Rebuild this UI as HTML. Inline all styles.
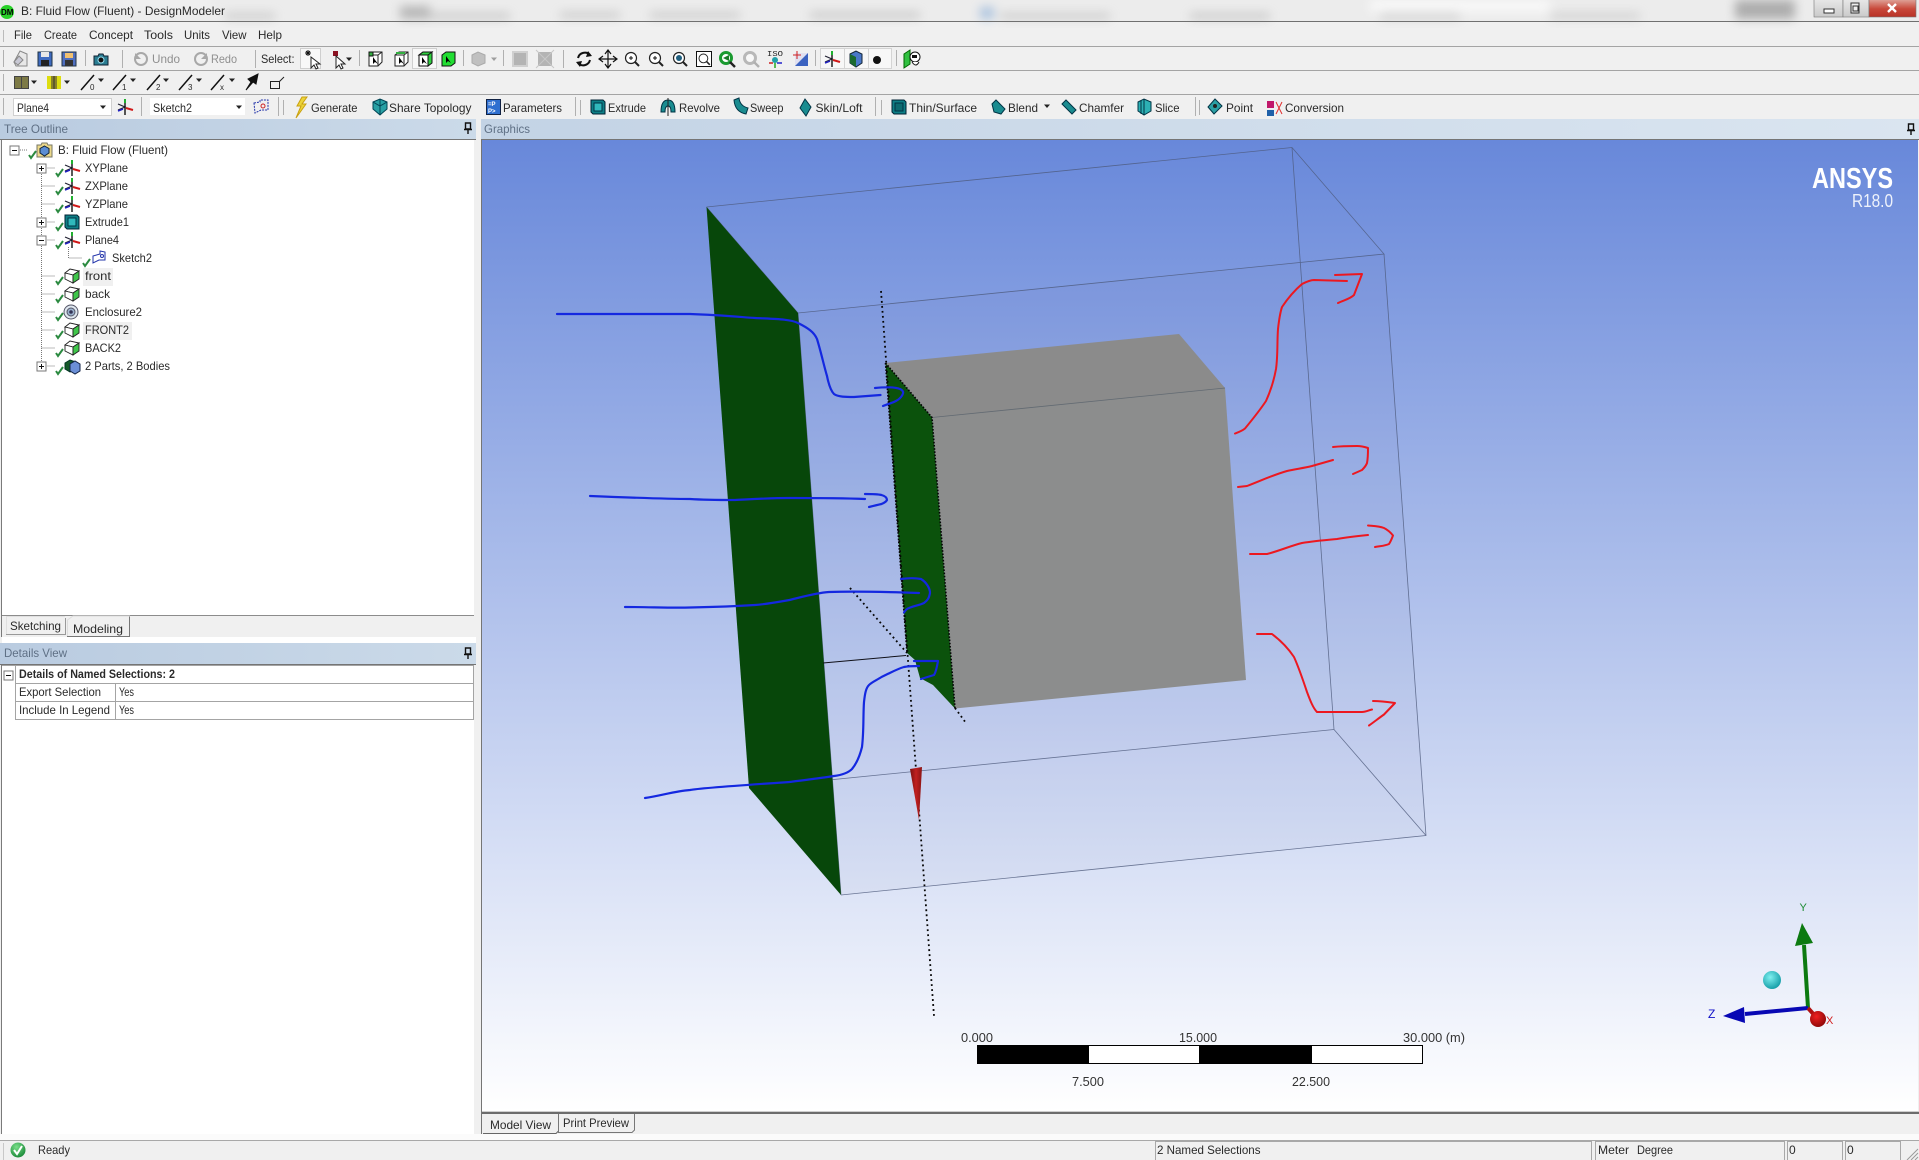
<!DOCTYPE html>
<html><head><meta charset="utf-8"><title>B: Fluid Flow (Fluent) - DesignModeler</title>
<style>
html,body{margin:0;padding:0;background:#f0f0f0;width:1919px;height:1160px;overflow:hidden}
svg{display:block;position:absolute;left:0;top:0}
text{font-family:"Liberation Sans",sans-serif;font-size:12px;fill:#2a2a2a}
.d{fill:#8f8f8f}
.h{fill:#5f7085}
.g{fill:#333;font-size:13px}
</style></head><body>
<svg xmlns="http://www.w3.org/2000/svg" width="1919" height="1160" viewBox="0 0 1919 1160">
<defs>
<linearGradient id="gfx" x1="0" y1="0" x2="0" y2="1"><stop offset="0" stop-color="#6888da"/><stop offset="1" stop-color="#ffffff"/></linearGradient>
<linearGradient id="hL" x1="0" x2="1" y1="0" y2="0"><stop offset="0" stop-color="#b9cbe0"/><stop offset="1" stop-color="#cbdae9"/></linearGradient>
<linearGradient id="hR" x1="0" x2="1" y1="0" y2="0"><stop offset="0" stop-color="#c3d3e5"/><stop offset="1" stop-color="#dae5f0"/></linearGradient>
<linearGradient id="cl" x1="0" x2="0" y1="0" y2="1"><stop offset="0" stop-color="#e0a89e"/><stop offset=".55" stop-color="#c8483a"/><stop offset="1" stop-color="#b83226"/></linearGradient>
<linearGradient id="mn" x1="0" x2="0" y1="0" y2="1"><stop offset="0" stop-color="#e8e8e8"/><stop offset="1" stop-color="#cacaca"/></linearGradient>
<linearGradient id="cone" x1="0" x2="1" y1="0" y2="0"><stop offset="0" stop-color="#7a1010"/><stop offset=".5" stop-color="#c02020"/><stop offset="1" stop-color="#8a1414"/></linearGradient>
<radialGradient id="cy" cx=".4" cy=".35" r=".7"><stop offset="0" stop-color="#7ff0f0"/><stop offset="1" stop-color="#109aa4"/></radialGradient>
<radialGradient id="rd" cx=".4" cy=".35" r=".7"><stop offset="0" stop-color="#f02020"/><stop offset="1" stop-color="#8a0808"/></radialGradient>
<radialGradient id="gc" cx=".4" cy=".3" r=".8"><stop offset="0" stop-color="#7adf8a"/><stop offset="1" stop-color="#108030"/></radialGradient>
<filter id="bl" x="-20%" y="-100%" width="140%" height="300%"><feGaussianBlur stdDeviation="5"/></filter>

<g id="chk"><path d="M-3 1 L-1 4 L4 -3" fill="none" stroke="#2b8a40" stroke-width="2"/></g>
<g id="pl"><path d="M-7 3 L0 0 L-7 -3" fill="none" stroke="#223" stroke-width="1.2"/><path d="M0 -6V8" stroke="#111" stroke-width="1.4"/><path d="M0 -8V-4" stroke="#20b030" stroke-width="2"/><path d="M1 1 L8 3" stroke="#d01818" stroke-width="2"/><path d="M-7 4 L-2 2" stroke="#2020c0" stroke-width="1.6"/></g>
<g id="cb"><path d="M-7 -3 L-2 -7 L7 -5 L1 -1Z" fill="#fff" stroke="#222" stroke-width=".9"/><path d="M-7 -3 L1 -1 L1 7 L-7 3Z" fill="#fff" stroke="#222" stroke-width=".9"/><path d="M1 -1 L7 -5 L7 3 L1 7Z" fill="#3fc64a" stroke="#222" stroke-width=".9"/></g>
<g id="cs"><path d="M-6 -4 L-2 -7 L7 -7 L7 3 L3 7 L-6 7Z M-6 -4 L3 -4 L3 7 M3 -4 L7 -7" fill="#fff" stroke="#222" stroke-width="1"/><path d="M-2 -2 L-2 5 L0 3 L3 5Z" fill="#000"/></g>
<g id="dd"><path d="M-3 -1.5 L3 -1.5 L0 2Z" fill="#222"/></g>
<g id="pin"><path d="M-2.5 -5 H2.5 V1 H-2.5Z M-4 1.5 H4 M0 2 V6" fill="none" stroke="#111" stroke-width="1.4"/></g>
<g id="bx"><rect x="-4.5" y="-4.5" width="9" height="9" fill="#fff" stroke="#777"/><path d="M-2.5 0 H2.5" stroke="#111"/></g>
<g id="bp"><rect x="-4.5" y="-4.5" width="9" height="9" fill="#fff" stroke="#777"/><path d="M-2.5 0 H2.5 M0 -2.5 V2.5" stroke="#111"/></g>
<g id="mg"><circle cx="-1" cy="-1" r="5.5" fill="#fff" stroke="#222" stroke-width="1.2"/><path d="M3 3 L7 7" stroke="#222" stroke-width="2"/></g>
<g id="teal"><path d="M-7 -7 H5 L7 -5 V7 H-5 L-7 5Z" fill="#0e7f86" stroke="#023"/><rect x="-4" y="-4" width="8" height="8" fill="#30b9bc" stroke="#034"/></g>
</defs>

<rect width="1919" height="1160" fill="#f0f0f0"/>

<!-- title bar -->
<rect width="1919" height="21" fill="#ececec"/>
<g filter="url(#bl)" opacity=".65">
<rect x="120" y="0" width="90" height="6" fill="#f8f8f8"/>
<rect x="225" y="13" width="50" height="6" fill="#b8b8b8"/>
<rect x="400" y="6" width="30" height="13" fill="#9a9a9a"/>
<rect x="430" y="13" width="80" height="6" fill="#b4b4b4"/>
<rect x="560" y="12" width="60" height="6" fill="#b8b8b8"/>
<rect x="650" y="12" width="90" height="6" fill="#b8b8b8"/>
<rect x="810" y="12" width="110" height="6" fill="#b4b4b4"/>
<rect x="980" y="7" width="14" height="12" fill="#8aaed8"/>
<rect x="1000" y="13" width="110" height="6" fill="#bababa"/>
<rect x="1190" y="13" width="80" height="6" fill="#b4b4b4"/>
<rect x="1370" y="0" width="180" height="12" fill="#ffffff"/>
<rect x="1380" y="13" width="80" height="6" fill="#bcbcbc"/>
<rect x="1550" y="13" width="90" height="6" fill="#c0c0c0"/>
<rect x="1735" y="0" width="60" height="19" fill="#8c8c8c"/>
</g>
<rect x="1814" y="-1" width="29" height="18" fill="url(#mn)" stroke="#777" stroke-width=".6"/>
<rect x="1843" y="-1" width="26" height="18" fill="url(#mn)" stroke="#777" stroke-width=".6"/>
<rect x="1869" y="-1" width="47" height="18" fill="url(#cl)" stroke="#777" stroke-width=".6"/>
<rect x="1824" y="9" width="10" height="4" fill="#fff" stroke="#333"/>
<rect x="1851" y="3" width="8" height="10" fill="#eee" stroke="#333"/><rect x="1853" y="6" width="5" height="5" fill="none" stroke="#333"/>
<path d="M1888 4 L1896 12 M1896 4 L1888 12" stroke="#fff" stroke-width="2.4"/>
<circle cx="7" cy="12" r="7" fill="#28d028"/>
<text x="1" y="15" style="font-size:8px;font-weight:bold;fill:#000">DM</text>
<text x="21" y="15" textLength="204" lengthAdjust="spacingAndGlyphs">B: Fluid Flow (Fluent) - DesignModeler</text>
<path d="M0 21.5H1919" stroke="#707070"/>

<!-- menu -->
<path d="M3.5 30V42" stroke="#bbb"/>
<text x="14" y="39" textLength="18" lengthAdjust="spacingAndGlyphs">File</text>
<text x="44" y="39" textLength="33" lengthAdjust="spacingAndGlyphs">Create</text>
<text x="89" y="39" textLength="44" lengthAdjust="spacingAndGlyphs">Concept</text>
<text x="144" y="39" textLength="29" lengthAdjust="spacingAndGlyphs">Tools</text>
<text x="184" y="39" textLength="26" lengthAdjust="spacingAndGlyphs">Units</text>
<text x="222" y="39" textLength="24.500" lengthAdjust="spacingAndGlyphs">View</text>
<text x="258" y="39" textLength="24" lengthAdjust="spacingAndGlyphs">Help</text>
<path d="M0 46.500H1919M0 70.500H1919M0 94.500H1919" stroke="#a4a4a4"/>

<!-- toolbar row 2 -->
<g stroke="#b0b0b0"><path d="M3.500 50V67M85.500 50V66M122.500 50V68M255.500 50V68M359.500 50V66M463.500 50V66M503.500 50V66M563.500 50V68M815.500 50V66M896.500 50V66"/></g>
<path d="M14 62 L20 51 L27 54 L27 66 L16 66Z" fill="#e8e8e8" stroke="#888"/><path d="M14 62 L19 56 L23 60 L18 65Z" fill="#c8c8d4" stroke="#888"/>
<rect x="38" y="52" width="14" height="14" fill="#3f6bc0" stroke="#234"/><rect x="41" y="52" width="8" height="5" fill="#e8e8e8"/><rect x="41" y="60" width="8" height="6" fill="#222"/>
<rect x="62" y="52" width="14" height="14" fill="#4f6fc0" stroke="#234"/><rect x="65" y="53" width="8" height="5" fill="#f0c070"/><rect x="65" y="60" width="8" height="6" fill="#333"/>
<path d="M94 56 H98 L99 54 H103 L104 56 H108 V65 H94Z" fill="#2a7d92" stroke="#123"/><circle cx="101" cy="60" r="3" fill="#111" stroke="#9de"/>
<circle cx="141" cy="59" r="6" fill="none" stroke="#a8a8a8" stroke-width="2"/><path d="M135 53 L135 59 L141 59Z" fill="#a8a8a8"/>
<text x="152" y="63" class="d" textLength="28" lengthAdjust="spacingAndGlyphs">Undo</text>
<circle cx="201" cy="59" r="6" fill="none" stroke="#a8a8a8" stroke-width="2"/><path d="M207 53 L207 59 L201 59Z" fill="#a8a8a8"/>
<text x="211" y="63" class="d" textLength="26" lengthAdjust="spacingAndGlyphs">Redo</text>
<text x="261" y="63" textLength="33.500" lengthAdjust="spacingAndGlyphs">Select:</text>
<rect x="300.500" y="48.500" width="20" height="20" fill="#f8f8f8" stroke="#cfcfcf"/>
<path d="M305 53H311M308 50V56M306 51L310 55M310 51L306 55" stroke="#111"/>
<path d="M311 57 V68 L314 65 L316 69 L318 68 L316 64 L320 64Z" fill="#fff" stroke="#222"/>
<rect x="333" y="51" width="5" height="5" fill="#8a1020"/>
<path d="M336 56 V68 L339 65 L341 69 L343 68 L341 64 L345 64Z" fill="#fff" stroke="#222"/>
<use href="#dd" x="349" y="59"/>
<use href="#cs" x="375" y="59"/><rect x="369" y="52" width="4" height="4" fill="#32b040" stroke="#111"/>
<use href="#cs" x="401" y="59"/><path d="M396 53 L405 53" stroke="#32b040" stroke-width="2"/>
<rect x="412.500" y="48.500" width="24" height="20" fill="#f8f8f8" stroke="#cfcfcf"/>
<use href="#cs" x="425" y="59"/><path d="M419 55 H428 V66 H419Z" fill="#fff" stroke="#111"/><path d="M419 55 L423 52 H432 L428 55Z M428 55 L432 52 V63 L428 66Z" fill="#30d040" stroke="#111"/><path d="M422 57 V64 L424 62 L427 64Z" fill="#000"/>
<path d="M442 55 L446 52 H455 V63 L451 66 H442Z" fill="#22dd33" stroke="#111"/><path d="M446 56 V63 L448 61 L451 63Z" fill="#000"/>
<path d="M472 55 L478 52 L485 55 V63 L478 66 L472 63Z" fill="#c0c0c0" stroke="#aaa"/><use href="#dd" x="494" y="59" opacity=".4"/>
<rect x="513" y="52" width="14" height="14" fill="#b4b4b4" stroke="#d0d0d0" stroke-width="2"/>
<rect x="538" y="52" width="14" height="14" fill="#b4b4b4"/><path d="M536 50 L554 68 M554 50 L536 68" stroke="#c8c8c8"/>
<!-- view -->
<path d="M590 55 A7 7 0 0 0 578 58 M578 63 A7 7 0 0 0 590 60" fill="none" stroke="#111" stroke-width="2"/><path d="M588 51 L592 56 L586 57Z M580 67 L576 62 L582 61Z" fill="#111"/>
<path d="M608 51V67M600 59H616M605 54L608 50L611 54M605 64L608 68L611 64M603 56L599 59L603 62M613 56L617 59L613 62" fill="none" stroke="#111" stroke-width="1.2"/>
<use href="#mg" x="632" y="59"/><path d="M629 58H633M631 56V60" stroke="#111"/>
<use href="#mg" x="656" y="59"/><path d="M653 58H657M655 56V60" stroke="#111"/>
<use href="#mg" x="680" y="59"/><circle cx="679" cy="58" r="3" fill="#1f5f7f"/>
<rect x="696.500" y="51.500" width="15" height="15" fill="#fff" stroke="#111"/><use href="#mg" x="704" y="59" transform="translate(141 12) scale(.8)"/>
<circle cx="726" cy="58" r="5.500" fill="#fff" stroke="#1a9a30" stroke-width="3"/><path d="M729 55 L723 58 L729 61Z" fill="#1a7a28"/><path d="M730 62 L735 67" stroke="#222" stroke-width="2.400"/>
<circle cx="750" cy="58" r="5.500" fill="#f8f8f8" stroke="#b8b8b8" stroke-width="3"/><path d="M754 62 L759 67" stroke="#b0b0b0" stroke-width="2.400"/>
<text x="767" y="56" style="font-family:'Liberation Mono',monospace;font-size:7.500px;fill:#222" textLength="16" lengthAdjust="spacingAndGlyphs">ISO</text>
<circle cx="775" cy="60" r="3" fill="#1fa0a8"/><path d="M769 63H773" stroke="#c22" stroke-width="1.500"/><path d="M777 63H782" stroke="#22c" stroke-width="1.500"/><path d="M775 63V68" stroke="#2a2" stroke-width="1.500"/>
<rect x="795" y="53" width="13" height="13" fill="#3b62c0"/><path d="M795 53 L808 53 L795 66Z" fill="#e0e0f0"/><path d="M793 55H801M797 51V59" stroke="#d02020"/>
<rect x="820.500" y="48.500" width="71" height="20" fill="#f7f7f7" stroke="#d4d4d4"/><path d="M844.500 49V68M868.500 49V68" stroke="#d4d4d4"/>
<use href="#pl" x="832" y="59"/>
<path d="M850 54 L856 51 L862 54 V63 L856 67 L850 63Z" fill="#4a78c8" stroke="#123"/><path d="M850 54 L856 57 L856 67 L850 63Z" fill="#1a6a30"/>
<circle cx="877" cy="60" r="4" fill="#111"/>
<path d="M904 54 L910 50 V64 L904 68Z" fill="#30c040" stroke="#060"/><circle cx="915" cy="57" r="5" fill="#fff" stroke="#111"/><path d="M912 62 Q916 68 919 62" fill="#fff" stroke="#111"/><rect x="912" y="55" width="5" height="3" fill="#111"/>

<!-- toolbar row 3 -->
<path d="M3.500 74V91" stroke="#b0b0b0"/>
<rect x="14.500" y="76.500" width="14" height="12" fill="#7d7a46" stroke="#444"/><path d="M21.500 77V88" stroke="#444"/><use href="#dd" x="34" y="82"/>
<rect x="47" y="76" width="14" height="13" fill="#dddd10"/><rect x="51" y="76" width="6" height="13" fill="#88822a"/><path d="M54 76V89" stroke="#333"/><use href="#dd" x="67" y="82"/>
<g stroke="#111" stroke-width="1.500"><path d="M81 90 L94 75M113 90 L126 75M147 90 L160 75M179 90 L192 75M211 90 L224 75"/></g>
<text x="90" y="90" style="font-size:8px">0</text><text x="122" y="90" style="font-size:8px">1</text><text x="156" y="90" style="font-size:8px">2</text><text x="188" y="90" style="font-size:8px">3</text><text x="220" y="90" style="font-size:8px">x</text>
<use href="#dd" x="101" y="80"/><use href="#dd" x="133" y="80"/><use href="#dd" x="166" y="80"/><use href="#dd" x="199" y="80"/><use href="#dd" x="232" y="80"/>
<path d="M246 90 L251 82 L248 79 L258 74 L256 84 L253 82Z" fill="#111" stroke="#111"/>
<path d="M270.500 81.500H279.500V88.500H270.500Z M279.500 81.500 L284 77" fill="none" stroke="#222"/>

<!-- toolbar row 4 -->
<path d="M3.500 98V115" stroke="#b0b0b0"/>
<rect x="13.500" y="98.500" width="98" height="17" fill="#fff" stroke="#d0d0d0"/><use href="#dd" x="103" y="107"/>
<text x="17" y="112" textLength="32" lengthAdjust="spacingAndGlyphs">Plane4</text>
<use href="#pl" x="125" y="107"/>
<path d="M141.500 97V116" stroke="#b0b0b0"/>
<rect x="150" y="98" width="95" height="17" fill="#fff"/><use href="#dd" x="239" y="107"/>
<text x="153" y="112" textLength="39" lengthAdjust="spacingAndGlyphs">Sketch2</text>
<path d="M254 103 L260 102 V100 H268 V110 H261 L255 113Z" fill="none" stroke="#2233aa" stroke-dasharray="2 1"/><circle cx="263" cy="106" r="2" fill="none" stroke="#c22"/>
<path d="M278.500 97V116M283.500 100V115" stroke="#b0b0b0"/>
<path d="M302 97 L297 106 H301 L296 118 L306 104 H302 L307 97Z" fill="#ecd43a" stroke="#c9a010"/>
<text x="311" y="112" textLength="46.500" lengthAdjust="spacingAndGlyphs">Generate</text>
<path d="M373 102 L380 99 L387 102 V109 L380 115 L373 109Z" fill="#28a0a4" stroke="#045"/><path d="M380 99V115M373 102L380 106L387 102" stroke="#045" fill="none"/>
<text x="389" y="112" textLength="82.500" lengthAdjust="spacingAndGlyphs">Share Topology</text>
<rect x="486.500" y="99.500" width="14" height="15" fill="#2f6fd0" stroke="#124"/><text x="488" y="106" style="font-size:6px;fill:#fff;font-weight:bold">=P</text><text x="488" y="113" style="font-size:6px;fill:#fff;font-weight:bold">P&gt;</text>
<text x="503" y="112" textLength="59" lengthAdjust="spacingAndGlyphs">Parameters</text>
<path d="M575.500 97V116M580.500 100V115" stroke="#b0b0b0"/>
<use href="#teal" x="598" y="107"/>
<text x="608" y="112" textLength="38" lengthAdjust="spacingAndGlyphs">Extrude</text>
<path d="M661 112 Q661 100 668 100 Q675 100 675 112 H671 Q671 106 668 106 Q665 106 665 112Z" fill="#1a8c90" stroke="#034"/><path d="M668 98V116" stroke="#222"/>
<text x="679" y="112" textLength="41" lengthAdjust="spacingAndGlyphs">Revolve</text>
<path d="M734 100 L739 98 Q740 106 748 108 L746 114 Q735 112 734 100Z" fill="#1a8c90" stroke="#034"/>
<text x="750" y="112" textLength="33.500" lengthAdjust="spacingAndGlyphs">Sweep</text>
<path d="M805 99 L811 107 L806 116 L800 108Z" fill="#1a8c90" stroke="#034"/>
<text x="815.500" y="112" textLength="47" lengthAdjust="spacingAndGlyphs">Skin/Loft</text>
<path d="M875.500 97V116M881.500 100V115" stroke="#b0b0b0"/>
<use href="#teal" x="899" y="107"/><rect x="895" y="103" width="8" height="8" fill="#0c6a70" stroke="#034"/>
<text x="909" y="112" textLength="68" lengthAdjust="spacingAndGlyphs">Thin/Surface</text>
<path d="M992 104 L996 100 L1005 109 L1001 114 L994 112Z" fill="#1a8c90" stroke="#034"/>
<text x="1008" y="112" textLength="30" lengthAdjust="spacingAndGlyphs">Blend</text>
<use href="#dd" x="1047" y="106"/>
<path d="M1062 104 L1066 100 L1076 110 L1072 114Z" fill="#1a8c90" stroke="#034"/>
<text x="1079" y="112" textLength="45" lengthAdjust="spacingAndGlyphs">Chamfer</text>
<path d="M1138 102 L1144 99 L1151 102 V111 L1144 115 L1138 111Z" fill="#2cb0b4" stroke="#034"/><path d="M1144 99V115M1141 100V114" stroke="#034"/>
<text x="1155" y="112" textLength="24.500" lengthAdjust="spacingAndGlyphs">Slice</text>
<path d="M1195.500 97V116M1199.500 100V115" stroke="#b0b0b0"/>
<path d="M1215 99 L1222 106 L1214 114 L1208 107Z" fill="#2aa0a4" stroke="#034"/><circle cx="1215" cy="106" r="2" fill="#222"/>
<text x="1226" y="112" textLength="27" lengthAdjust="spacingAndGlyphs">Point</text>
<rect x="1267" y="101" width="7" height="7" fill="#c0186a"/><rect x="1267" y="110" width="7" height="6" fill="#2060a8"/><path d="M1276 102 L1282 114 M1282 102 L1276 114" stroke="#e03030"/>
<text x="1285" y="112" textLength="59" lengthAdjust="spacingAndGlyphs">Conversion</text>

<!-- panel headers -->
<rect x="0" y="119" width="476" height="21" fill="url(#hL)"/>
<rect x="481" y="119" width="1438" height="21" fill="url(#hR)"/>
<path d="M0 139.500H476M481 139.500H1919" stroke="#757575"/>
<text x="4" y="133" class="h" textLength="64" lengthAdjust="spacingAndGlyphs">Tree Outline</text>
<text x="484" y="133" class="h" textLength="46" lengthAdjust="spacingAndGlyphs">Graphics</text>
<use href="#pin" x="468" y="128"/><use href="#pin" x="1911" y="129"/>

<!-- tree -->
<rect x="2" y="140" width="472" height="475" fill="#fff"/>
<path d="M1.500 140V637" stroke="#7a7a7a"/>
<rect x="83" y="268" width="30" height="18" fill="#f0f0f0"/>
<rect x="83" y="322" width="49" height="18" fill="#f0f0f0"/>
<g stroke="#777" stroke-dasharray="1 1" fill="none">
<path d="M41.500 172V366M41.500 168H55M41.500 186H55M41.500 204H55M41.500 222H55M41.500 240H55M41.500 276H55M41.500 294H55M41.500 312H55M41.500 330H55M41.500 348H55M41.500 366H55M20 150H28M68.500 247V258H82"/>
</g>
<use href="#bx" x="14.500" y="150.500"/>
<use href="#chk" x="32" y="154"/>
<path d="M37 145 H41 L42 143 H47 L48 145 H52 V157 H37Z" fill="#ecd98a" stroke="#776"/><path d="M44.500 146 L49 148.500 V153 L44.500 156 L40 153 V148.500Z" fill="#5b8dd4" stroke="#123"/>
<text x="58" y="154" textLength="110" lengthAdjust="spacingAndGlyphs">B: Fluid Flow (Fluent)</text>

<use href="#bp" x="41.500" y="168.500"/><use href="#chk" x="59" y="172"/><use href="#pl" x="72" y="168"/>
<text x="85" y="172" textLength="43" lengthAdjust="spacingAndGlyphs">XYPlane</text>
<use href="#chk" x="59" y="190"/><use href="#pl" x="72" y="186"/>
<text x="85" y="190" textLength="43" lengthAdjust="spacingAndGlyphs">ZXPlane</text>
<use href="#chk" x="59" y="208"/><use href="#pl" x="72" y="204"/>
<text x="85" y="208" textLength="43" lengthAdjust="spacingAndGlyphs">YZPlane</text>
<use href="#bp" x="41.500" y="222.500"/><use href="#chk" x="59" y="226"/><use href="#teal" x="72" y="222"/>
<text x="85" y="226" textLength="44" lengthAdjust="spacingAndGlyphs">Extrude1</text>
<use href="#bx" x="41.500" y="240.500"/><use href="#chk" x="59" y="244"/><use href="#pl" x="72" y="240"/>
<text x="85" y="244" textLength="34" lengthAdjust="spacingAndGlyphs">Plane4</text>
<use href="#chk" x="86" y="262"/>
<path d="M93 263 V256 L100 254 V251 L105 252 V260 L99 260 Z" fill="#fff" stroke="#2233aa"/><circle cx="102" cy="256" r="1.500" fill="none" stroke="#2233aa"/>
<text x="112" y="262" textLength="40" lengthAdjust="spacingAndGlyphs">Sketch2</text>
<use href="#chk" x="59" y="280"/><use href="#cb" x="72" y="276"/>
<text x="85" y="280" textLength="26" lengthAdjust="spacingAndGlyphs">front</text>
<use href="#chk" x="59" y="298"/><use href="#cb" x="72" y="294"/>
<text x="85" y="298" textLength="25" lengthAdjust="spacingAndGlyphs">back</text>
<use href="#chk" x="59" y="316"/><circle cx="71" cy="312" r="7" fill="#dfe8f0" stroke="#556"/><circle cx="71" cy="312" r="4" fill="#9ab0cc" stroke="#556"/><circle cx="71" cy="312" r="1.800" fill="#335"/>
<text x="85" y="316" textLength="57" lengthAdjust="spacingAndGlyphs">Enclosure2</text>
<use href="#chk" x="59" y="334"/><use href="#cb" x="72" y="330"/>
<text x="85" y="334" textLength="44" lengthAdjust="spacingAndGlyphs">FRONT2</text>
<use href="#chk" x="59" y="352"/><use href="#cb" x="72" y="348"/>
<text x="85" y="352" textLength="36" lengthAdjust="spacingAndGlyphs">BACK2</text>
<use href="#bp" x="41.500" y="366.500"/><use href="#chk" x="59" y="370"/>
<path d="M65 363 L70 360 L76 362 V370 L70 372 L65 369Z" fill="#155a28" stroke="#032"/><path d="M70 364 L75 361 L80 364 V371 L75 374 L70 371Z" fill="#6b8fd6" stroke="#124"/>
<text x="85" y="370" textLength="85" lengthAdjust="spacingAndGlyphs">2 Parts, 2 Bodies</text>

<!-- tabs left -->
<path d="M2 615.500H474" stroke="#8c8c8c"/>
<rect x="2" y="616" width="472" height="21" fill="#f0f0f0"/>
<rect x="2" y="637" width="474" height="6" fill="#fff"/>
<path d="M6.500 634.500V616.500H65" fill="none" stroke="#e0e0e0"/><path d="M6 634.500H65.500V618" fill="none" stroke="#999"/>
<text x="10" y="630" textLength="51" lengthAdjust="spacingAndGlyphs">Sketching</text>
<path d="M67 636.500H129.500V616.500" fill="none" stroke="#777"/><path d="M67.500 636V620L73 616H130" fill="none" stroke="#dcdcdc"/>
<text x="73" y="633" textLength="50" lengthAdjust="spacingAndGlyphs">Modeling</text>

<!-- details -->
<rect x="0" y="643" width="476" height="21" fill="url(#hL)"/>
<path d="M0 664.500H476" stroke="#757575"/>
<text x="4" y="657" class="h" textLength="63" lengthAdjust="spacingAndGlyphs">Details View</text>
<use href="#pin" x="468" y="653"/>
<rect x="2" y="665" width="472" height="469" fill="#fff"/>
<path d="M1.500 665V1134" stroke="#7a7a7a"/>
<g stroke="#a4a4a4" fill="none"><path d="M2 665.500H473.500V719.500H15.500V665.500M15.500 683.500H473.500M15.500 701.500H473.500M115.500 683.500V719.500"/></g>
<use href="#bx" x="8.500" y="675.500"/>
<text x="19" y="678" style="font-weight:bold" textLength="156" lengthAdjust="spacingAndGlyphs">Details of Named Selections: 2</text>
<text x="19" y="696" textLength="82" lengthAdjust="spacingAndGlyphs">Export Selection</text>
<text x="119" y="696" textLength="15" lengthAdjust="spacingAndGlyphs">Yes</text>
<text x="19" y="714" textLength="91" lengthAdjust="spacingAndGlyphs">Include In Legend</text>
<text x="119" y="714" textLength="15" lengthAdjust="spacingAndGlyphs">Yes</text>

<!-- graphics -->
<rect x="482" y="140" width="1436" height="972" fill="url(#gfx)"/>
<path d="M481.500 140V1134" stroke="#757575"/>
<path d="M482 1111.500H1919" stroke="#cfcfcf"/><path d="M482 1113H1919" stroke="#6c6c6c" stroke-width="2"/>
<rect x="482" y="1114" width="1437" height="20" fill="#f0f0f0"/>

<!-- enclosure tint and wireframe -->
<path d="M798 313 L1384 254 L1426 835.500 L841 895Z" fill="#5a6a90" opacity=".04"/>
<g fill="none" stroke="#4d5a7c" stroke-width=".8" opacity=".8">
<path d="M706.500 207 L1292 147.500 L1384 254 L798 313 L706.500 207"/>
<path d="M1292 147.500 L1334 729.500 L1426 835.500 M1384 254 L1426 835.500 L841 895 M749 788 L1334 729.500 M798 313 L841 895"/>
</g>
<path d="M706.500 207 L798 313 L841 895 L749 788Z" fill="#07470a"/>

<!-- gray box -->
<path d="M885.500 363 L1179 334 L1225 388 L932 417.500Z" fill="#8b8b8b"/>
<path d="M932 417.500 L1225 388 L1246 680 L955 708.500Z" fill="#8c8d8d"/>
<path d="M932 417.500 L1225 388" stroke="#626a72" fill="none" stroke-width=".8"/>
<path d="M885.500 363 L932 417.500 L955 708.500 L933 685 L920 678 L915 660 L907 653Z" fill="#0b520c"/>
<g fill="none" stroke="#050505" stroke-width="1.600" stroke-dasharray="1.600 1.600">
<path d="M885.500 363 L907 653"/><path d="M885.500 363 L932 417.500 L955 708.500"/>
</g>
<g fill="none" stroke="#050505" stroke-width="1.800" stroke-dasharray="1.800 3.200">
<path d="M881 291 L934 1016"/>
<path d="M850 588 L907 653"/><path d="M955 708 L966 723"/>
</g>
<path d="M823 663 L906 655.500" stroke="#101018" fill="none"/>

<!-- cone -->
<path d="M910 769 L922 767 L919 820Z" fill="url(#cone)"/>

<!-- blue -->
<g fill="none" stroke="#1428e0" stroke-width="2.200" stroke-linecap="round" stroke-linejoin="round">
<path d="M557 314 C620 314 660 314 690 314 C720 315 740 317 755 318 C775 319 790 319 798 323 C808 328 814 332 817 339 C821 352 824 366 827 376 C829 386 831 391 834 394 C838 397 846 397 854 397 L880.500 395"/>
<path d="M875 388 C885 387 895 387 900 389 C904 391 904 393 901 397 C897 402 890 403 883 406"/>
<path d="M590 496 C640 498 665 499 690 499 C705 500 720 500 735 500 C755 499 770 498 790 498 C815 498 840 498 865 499"/>
<path d="M865 494 C872 494 877 494 881.500 495 C885 496 887 498 887 500 C886 502 884 503 881.500 504 C877 505 873 506 869 507"/>
<path d="M625 607 C650 607 670 608 690 607.500 C715 607 740 606 755 605 C768 604 778 602 789.500 600 C802 597 815 593 829 592 C860 591 890 592 919 593"/>
<path d="M901 579 C908 578 916 578 921 579 C926 582 930 588 930 593 C929 598 928 600 924 603 C920 605 914 606 909 608 C906 609 905 611 904 612.500"/>
<path d="M645 798 C660 796 675 791 690 790 C700 788 745 785 789.500 782 C805 780 822 778 834 776 C842 775 848 773 852 769 C857 763 860 755 862 747 C864 730 863 716 864 702 C865 693 866 688 869 685 C872 682 877 680 881.500 677 C890 673 897 669 904 667 C909 666 914 666 919 666"/>
<path d="M914 661 L938 661 C937 667 936 672 934 675 L921 679"/>
</g>

<!-- red -->
<g fill="none" stroke="#ec1820" stroke-width="2" stroke-linecap="round" stroke-linejoin="round">
<path d="M1235 433.500 C1239 432 1242 431 1245 428.500 C1252 420 1260 410 1266 401 C1271 390 1274 380 1276 369 C1278 355 1277 342 1278 329 C1279 320 1280 313 1282 307 C1288 298 1295 290 1302 284 C1306 282 1310 280 1314 280 L1347 281"/>
<path d="M1335 275 L1362 274 L1354 295 C1350 299 1344 300 1338 303"/>
<path d="M1238 487 L1247 486 C1260 481 1273 475 1287 471 C1296 469 1304 468 1312 466 L1333 460"/>
<path d="M1333 447 C1342 446 1350 446 1357 446 C1361 446 1365 447 1368 448 C1368 453 1368 458 1367 463 C1366 466 1364 468 1362 470 L1353 474"/>
<path d="M1250 554 C1255 554 1261 554 1267 554 C1279 551 1290 546 1302 543 C1314 541 1326 540 1337 539 C1348 537 1358 536 1368 535"/>
<path d="M1368 525.500 C1374 526 1379 526 1384 528 C1388 530 1391 533 1393 535.500 C1392 538 1391 541 1389 544 C1385 546 1380 546 1375 547"/>
<path d="M1257 634 L1272 634 C1280 640 1288 648 1294 657 C1299 668 1303 680 1307 692 C1310 700 1313 708 1317 712 L1362 712 C1366 712 1369 710 1372 709.500"/>
<path d="M1373 701 C1380 701 1388 702 1395 703 L1384 714.500 C1379 718 1374 722 1369 725.500"/>
</g>

<!-- ANSYS -->
<text x="1812" y="188" textLength="81" lengthAdjust="spacingAndGlyphs" style="font-size:29px;fill:#fff;font-weight:bold">ANSYS</text>
<text x="1852" y="207" textLength="41" lengthAdjust="spacingAndGlyphs" style="font-size:18px;fill:#eef2fb">R18.0</text>

<!-- scale bar -->
<rect x="977.500" y="1045.500" width="445" height="18" fill="#fff" stroke="#000"/>
<rect x="977" y="1045" width="112" height="19" fill="#000"/>
<rect x="1199" y="1045" width="113" height="19" fill="#000"/>
<text x="961" y="1042" class="g" textLength="32" lengthAdjust="spacingAndGlyphs">0.000</text>
<text x="1179" y="1042" class="g" textLength="38" lengthAdjust="spacingAndGlyphs">15.000</text>
<text x="1403" y="1042" class="g" textLength="62" lengthAdjust="spacingAndGlyphs">30.000 (m)</text>
<text x="1072" y="1086" class="g" textLength="32" lengthAdjust="spacingAndGlyphs">7.500</text>
<text x="1292" y="1086" class="g" textLength="38" lengthAdjust="spacingAndGlyphs">22.500</text>

<!-- triad -->
<circle cx="1772" cy="980" r="9" fill="url(#cy)"/>
<path d="M1804 945 L1808 1008" stroke="#0c7a10" stroke-width="4"/>
<path d="M1802 923 L1795 946 L1813 943Z" fill="#0c7a10"/>
<path d="M1808 1008 L1745 1014" stroke="#0808b4" stroke-width="4"/>
<path d="M1723 1016 L1744 1007 L1745 1023Z" fill="#0808b4"/>
<path d="M1808 1008 L1816 1017" stroke="#b01010" stroke-width="4"/>
<circle cx="1818" cy="1019" r="8" fill="url(#rd)"/>
<text x="1799.500" y="911" style="font-size:11px;fill:#1a8a30">Y</text>
<text x="1708" y="1018" style="font-size:12px;fill:#1010c8">Z</text>
<text x="1826" y="1024" style="font-size:11px;fill:#d02020">X</text>

<!-- graphics tabs -->
<rect x="483" y="1114" width="75" height="20" fill="#f0f0f0"/>
<path d="M483 1133.500H556L558.500 1131V1114" fill="none" stroke="#666"/>
<text x="490" y="1129" textLength="61" lengthAdjust="spacingAndGlyphs">Model View</text>
<path d="M558.500 1114V1132.500H632L634.500 1130V1114" fill="none" stroke="#777"/>
<text x="563" y="1127" textLength="66" lengthAdjust="spacingAndGlyphs">Print Preview</text>

<!-- status bar -->
<rect x="0" y="1134" width="1919" height="6" fill="#fbfbfb"/>
<path d="M0 1140.500H1919" stroke="#a8a8a8"/>
<rect x="0" y="1141" width="1919" height="19" fill="#f0f0f0"/>
<path d="M3.500 1143V1160" stroke="#c8c8c8"/>
<circle cx="18" cy="1150" r="7.500" fill="url(#gc)"/><path d="M14 1150 L17 1154 L22 1146" fill="none" stroke="#fff" stroke-width="2"/>
<text x="38" y="1154" textLength="32" lengthAdjust="spacingAndGlyphs">Ready</text>
<g fill="none" stroke="#a8a8a8"><path d="M1155.500 1160V1141.500H1591.500V1160M1595.500 1160V1141.500H1784.500V1160M1787.500 1160V1141.500H1842.500V1160M1845.500 1160V1141.500H1900.500V1160"/></g>
<text x="1157" y="1154" textLength="103.500" lengthAdjust="spacingAndGlyphs">2 Named Selections</text>
<text x="1598" y="1154" textLength="31" lengthAdjust="spacingAndGlyphs">Meter</text>
<text x="1637" y="1154" textLength="36" lengthAdjust="spacingAndGlyphs">Degree</text>
<text x="1789" y="1154">0</text>
<text x="1847" y="1154">0</text>
<path d="M1907 1160L1918 1149M1911 1160L1918 1153M1915 1160L1918 1157" stroke="#9a9a9a"/>
</svg>
</body></html>
